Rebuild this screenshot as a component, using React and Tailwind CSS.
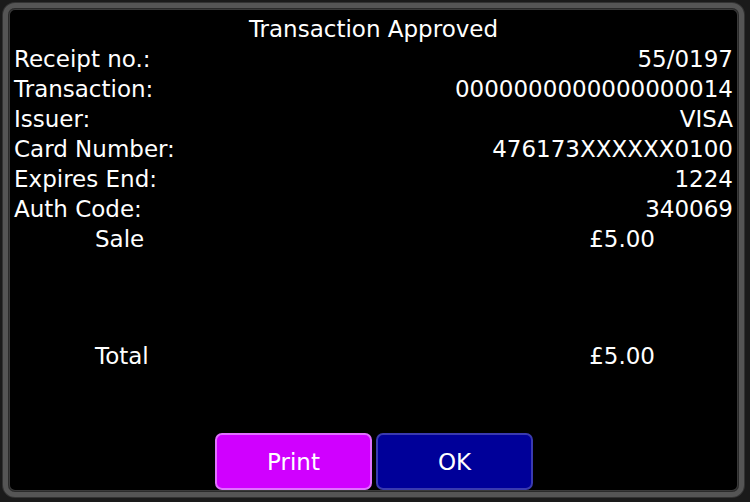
import React from 'react';

const details = [
  { label: 'Receipt no.:', value: '55/0197' },
  { label: 'Transaction:', value: '0000000000000000014' },
  { label: 'Issuer:', value: 'VISA' },
  { label: 'Card Number:', value: '476173XXXXXX0100' },
  { label: 'Expires End:', value: '1224' },
  { label: 'Auth Code:', value: '340069' },
];

function AmountRow({ label, amount }) {
  return (
    <div className="flex h-[30px] items-center">
      <span className="w-[81px]" />
      <span className="flex-1">{label}</span>
      <span className="pr-[78px]">{amount}</span>
    </div>
  );
}

function App() {
  return (
    <div className="w-[750px] h-[502px] bg-[#1a1a1a] p-[3px] font-['DejaVu_Sans',sans-serif]">
      <div className="h-[494px] w-[741px] rounded-[12px] border-[5px] border-[#555] bg-black shadow-[inset_0_0_0_1px_#2a2a2a,inset_0_0_0_2px_#3a3a3a,0_0_0_1px_#333] flex flex-col text-white text-[23px] leading-[30px]">
        <div className="px-[6px] pt-[6px]">
          <div className="text-center h-[30px]">Transaction Approved</div>
          {details.map(row => (
            <div key={row.label} className="flex justify-between h-[30px]">
              <span>{row.label}</span>
              <span>{row.value}</span>
            </div>
          ))}
          <AmountRow label="Sale" amount="£5.00" />
          <div className="h-[87px]" />
          <AmountRow label="Total" amount="£5.00" />
        </div>

        <div className="flex-1" />

        <div className="flex justify-center gap-[4px] pb-[2px] pl-[1px]">
          <button className="w-[157px] h-[57px] rounded-[7px] bg-[#d000ff] border-2 border-[#e070ff] text-white text-[23px]">
            Print
          </button>
          <button className="w-[157px] h-[57px] rounded-[7px] bg-[#000099] border-2 border-[#3a3ab0] text-white text-[23px]">
            OK
          </button>
        </div>
      </div>
    </div>
  );
}

export default App;
